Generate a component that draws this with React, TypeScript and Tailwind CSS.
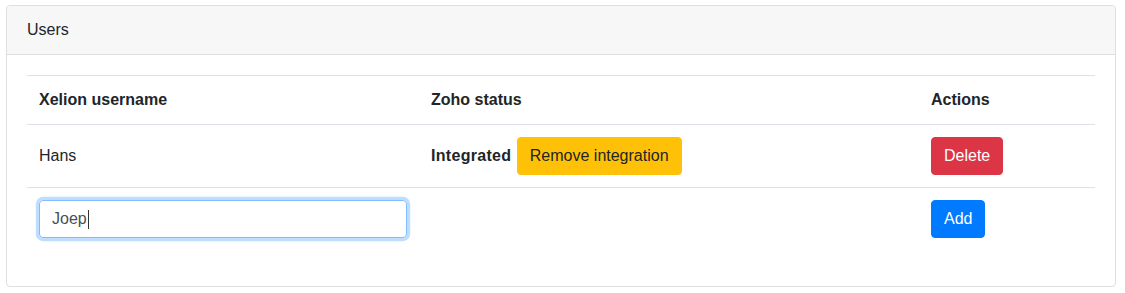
import React from "react";

const users = [{ name: "Hans", integrated: true }];

const App = () => {
  return (
    <div className="min-h-screen bg-white pl-[6px] pr-[9px] pt-[5px] font-['Liberation_Sans',Arial,sans-serif] text-[16px] leading-6 text-[#212529]">
      <div className="rounded border border-[#dfdfdf] bg-white">
        <div className="rounded-t border-b border-[#dfdfdf] bg-[#f7f7f7] px-5 py-3">Users</div>
        <div className="p-5">
          <table className="mb-4 w-full border-collapse">
            <thead>
              <tr>
                <th className="w-[392px] border-t border-[#dee2e6] p-3 text-left font-bold">Xelion username</th>
                <th className="w-[500px] border-t border-[#dee2e6] p-3 text-left font-bold">Zoho status</th>
                <th className="border-t border-[#dee2e6] p-3 text-left font-bold">Actions</th>
              </tr>
            </thead>
            <tbody>
              {users.map((u) => (
                <tr key={u.name}>
                  <td className="border-t border-[#dee2e6] p-3 align-middle">{u.name}</td>
                  <td className="border-t border-[#dee2e6] p-3 align-middle">
                    <span className="font-bold tracking-[0.3px]">Integrated</span>{" "}
                    <button className="ml-[1px] h-[38px] rounded border border-[#ffc107] bg-[#ffc107] px-3 text-[#212529]">
                      Remove integration
                    </button>
                  </td>
                  <td className="border-t border-[#dee2e6] p-3 align-middle">
                    <button className="h-[38px] rounded border border-[#dc3545] bg-[#dc3545] px-3 text-white">Delete</button>
                  </td>
                </tr>
              ))}
              <tr>
                <td className="border-t border-[#dee2e6] p-3 align-middle">
                  <div className="flex h-[38px] w-full items-center rounded border border-[#80bdff] px-3 text-[#495057] shadow-[0_0_0_3.2px_rgba(0,123,255,0.25)]">
                    Joep
                    <span className="ml-[1px] inline-block h-[19px] w-px bg-[#333]" />
                  </div>
                </td>
                <td className="border-t border-[#dee2e6] p-3 align-middle"></td>
                <td className="border-t border-[#dee2e6] p-3 align-middle">
                  <button className="h-[38px] rounded border border-[#007bff] bg-[#007bff] px-3 text-white">Add</button>
                </td>
              </tr>
            </tbody>
          </table>
        </div>
      </div>
    </div>
  );
};

export default App;
